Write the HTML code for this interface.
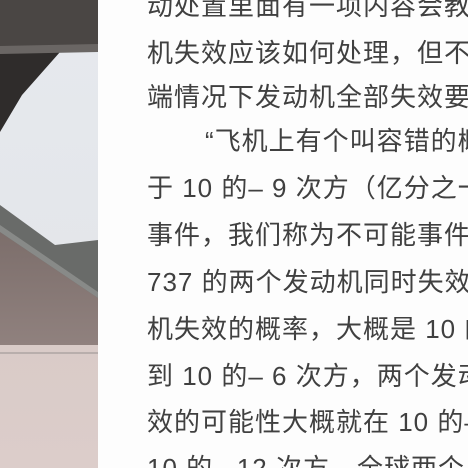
<!DOCTYPE html>
<html><head><meta charset="utf-8"><style>
html,body{margin:0;padding:0;width:468px;height:468px;overflow:hidden;background:#fdfdfd}
#w{position:relative;width:468px;height:468px;overflow:hidden}
.ph{position:absolute;left:0;top:0;width:98px;height:468px}
.l{position:absolute;left:147px;white-space:nowrap;font-family:"Liberation Sans","Noto Sans CJK SC",sans-serif;font-size:26px;letter-spacing:1px;color:#404040;line-height:30px;height:30px}
</style></head><body><div id="w">
<svg class="ph" viewBox="0 0 98 468" xmlns="http://www.w3.org/2000/svg">
<defs>
<linearGradient id="sky" x1="0" y1="0" x2="0" y2="1"><stop offset="0" stop-color="#e6e9ee"/><stop offset="1" stop-color="#e2e4e7"/></linearGradient>
<linearGradient id="eng" x1="0" y1="0" x2="0" y2="1"><stop offset="0" stop-color="#7a6c69"/><stop offset="0.6" stop-color="#948582"/><stop offset="1" stop-color="#c2b3b0"/></linearGradient>
<linearGradient id="gr" x1="0" y1="0" x2="0" y2="1"><stop offset="0" stop-color="#d9cbc8"/><stop offset="1" stop-color="#dccdca"/></linearGradient>
</defs>
<rect width="98" height="468" fill="url(#sky)"/>
<rect width="98" height="52" fill="#4a4644"/>
<polygon points="0,52 60,52 22,95 0,132" fill="#2f2c2b"/>
<polygon points="0,46 98,44 98,52 0,54" fill="#6a6664"/>
<polygon points="0,220 98,290 98,468 0,468" fill="url(#eng)"/>
<polygon points="0,205 55,245 98,240 98,298 0,232" fill="#696b69"/>
<polygon points="0,225 98,292 98,298 0,232" fill="#888a88"/>
<rect x="0" y="345" width="98" height="123" fill="url(#gr)"/>
<rect x="0" y="352" width="98" height="2" fill="#b8aeac"/>
</svg>
<div class="l" style="top:-9px">动处置里面有一项内容会教</div>
<div class="l" style="top:38px">机失效应该如何处理，但不</div>
<div class="l" style="top:82px">端情况下发动机全部失效要如</div>
<div class="l" style="top:126px;left:205px">“飞机上有个叫容错的概</div>
<div class="l" style="top:173px">于 10 的– 9 次方（亿分之一）</div>
<div class="l" style="top:220px">事件，我们称为不可能事件，</div>
<div class="l" style="top:267px">737 的两个发动机同时失效。</div>
<div class="l" style="top:314px">机失效的概率，大概是 10 的</div>
<div class="l" style="top:361px">到 10 的– 6 次方，两个发动</div>
<div class="l" style="top:407px">效的可能性大概就在 10 的–</div>
<div class="l" style="top:453px">10 的– 12 次方，全球两个发</div>
</div></body></html>
